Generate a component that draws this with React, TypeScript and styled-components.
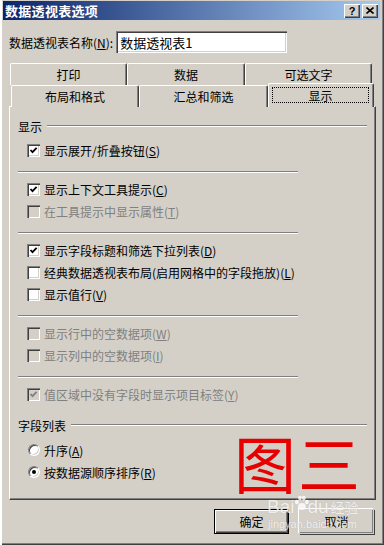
import styled, { createGlobalStyle } from 'styled-components'

const GlobalStyle = createGlobalStyle`
  body {
    margin: 0;
    background: #d4d0c8;
    font-family: "Noto Sans CJK SC", "Liberation Sans", sans-serif;
    font-size: 12px;
    color: #000;
  }
`

type Item = { label: string; key: string; checked?: boolean; disabled?: boolean }

const groups: Item[][] = [
  [{ label: '显示展开/折叠按钮', key: 'S', checked: true }],
  [
    { label: '显示上下文工具提示', key: 'C', checked: true },
    { label: '在工具提示中显示属性', key: 'T', disabled: true },
  ],
  [
    { label: '显示字段标题和筛选下拉列表', key: 'D', checked: true },
    { label: '经典数据透视表布局(启用网格中的字段拖放)', key: 'L' },
    { label: '显示值行', key: 'V' },
  ],
  [
    { label: '显示行中的空数据项', key: 'W', disabled: true },
    { label: '显示列中的空数据项', key: 'I', disabled: true },
  ],
  [{ label: '值区域中没有字段时显示项目标签', key: 'Y', checked: true, disabled: true }],
]

function Label({ item }: { item: Item }) {
  return (
    <RowText $disabled={item.disabled}>
      {item.label}(<u>{item.key}</u>)
    </RowText>
  )
}

export default function App() {
  return (
    <>
      <GlobalStyle />
      <Window>
        <TitleBar>
          <Title>数据透视表选项</Title>
          <TitleButton>?</TitleButton>
          <TitleButton>
            <svg width="8" height="7" viewBox="0 0 8 7">
              <path d="M0.5 0.5 L7.5 6.5 M7.5 0.5 L0.5 6.5" stroke="#000" strokeWidth="1.6" />
            </svg>
          </TitleButton>
        </TitleBar>

        <NameRow>
          <span>
            数据透视表名称(<u>N</u>):
          </span>
          <NameInput>数据透视表1</NameInput>
        </NameRow>

        <TabStrip>
          <TabRow $indent={7}>
            <Tab $w={117}>打印</Tab>
            <Tab $w={118}>数据</Tab>
            <Tab $w={127}>可选文字</Tab>
          </TabRow>
          <TabRow $indent={8}>
            <Tab $w={128}>布局和格式</Tab>
            <Tab $w={129}>汇总和筛选</Tab>
            <Tab $w={106} $selected>
              <FocusRing>显示</FocusRing>
            </Tab>
          </TabRow>
        </TabStrip>

        <Panel>
          <SectionHeader>
            <span>显示</span>
            <Etched />
          </SectionHeader>
          <Group $top={4}>
            {groups.map((g, gi) => (
              <div key={gi}>
                {gi > 0 && <Separator />}
                {g.map((item) => (
                  <Row key={item.key}>
                    <CheckBox $disabled={item.disabled}>
                      {item.checked && (
                        <svg width="9" height="9" viewBox="0 0 9 9">
                          <path
                            d="M1.5 4 L3.5 6.2 L7.6 1.8"
                            fill="none"
                            stroke={item.disabled ? '#808080' : '#000'}
                            strokeWidth="1.8"
                          />
                        </svg>
                      )}
                    </CheckBox>
                    <Label item={item} />
                  </Row>
                ))}
              </div>
            ))}
          </Group>

          <SectionHeader $top={11}>
            <span>字段列表</span>
            <Etched />
          </SectionHeader>
          <Group $top={5}>
            <Row>
              <Radio />
              <RowText>
                升序(<u>A</u>)
              </RowText>
            </Row>
            <Row>
              <Radio $checked />
              <RowText>
                按数据源顺序排序(<u>R</u>)
              </RowText>
            </Row>
          </Group>
        </Panel>

        <ButtonBar>
          <DialogButton $default>确定</DialogButton>
          <DialogButton>取消</DialogButton>
        </ButtonBar>

        <RedMark>图三</RedMark>
        <Watermark>
          <WmBig>
            <span>Bai</span>
            <svg width="17" height="17" viewBox="0 0 22 22">
              <g fill="rgba(255,255,255,0.8)">
                <ellipse cx="5" cy="9" rx="2.5" ry="3" />
                <ellipse cx="9" cy="4" rx="2.5" ry="3" />
                <ellipse cx="14" cy="4" rx="2.5" ry="3" />
                <ellipse cx="18" cy="9" rx="2.5" ry="3" />
                <ellipse cx="11.5" cy="15" rx="5" ry="4.5" />
              </g>
            </svg>
            <span>du</span>
            <WmCjk>经验</WmCjk>
          </WmBig>
          <WmSmall>jingyan.baidu.com</WmSmall>
        </Watermark>
      </Window>
    </>
  )
}

const Window = styled.div`
  position: relative;
  width: 384px;
  height: 545px;
  box-sizing: border-box;
  padding: 1px 4px 2px 3px;
  background: #d4d0c8;
  box-shadow: inset 2px 0 #fff, inset 1px 0 #d4d0c8, inset -1px -1px #404040,
    inset -2px -2px #808080;
  overflow: hidden;
`

const TitleBar = styled.div`
  display: flex;
  align-items: center;
  gap: 2px;
  height: 19px;
  padding: 0 2px 0 2px;
  background: linear-gradient(to right, #0a246a, #a6caf0);
`

const Title = styled.div`
  flex: 1;
  color: #fff;
  font-weight: bold;
  font-size: 13px;
  letter-spacing: 0.3px;
`

const TitleButton = styled.div`
  display: flex;
  align-items: center;
  justify-content: center;
  width: 16px;
  height: 14px;
  box-sizing: border-box;
  background: #d4d0c8;
  font-family: "Liberation Sans", sans-serif;
  font-weight: bold;
  font-size: 11px;
  box-shadow: inset 1px 1px #fff, inset -1px -1px #404040, inset -2px -2px #808080;
`

const NameRow = styled.div`
  display: flex;
  align-items: center;
  gap: 3px;
  margin-top: 11px;
  padding-left: 6px;
  font-size: 12px;
`

const NameInput = styled.div`
  width: 171px;
  height: 22px;
  box-sizing: border-box;
  display: flex;
  align-items: center;
  padding-left: 4px;
  background: #fff;
  font-size: 13px;
  box-shadow: inset 1px 1px #808080, inset 2px 2px #404040, inset -1px -1px #fff,
    inset -2px -2px #d4d0c8;
`

const TabStrip = styled.div`
  margin-top: 10px;
`

const TabRow = styled.div<{ $indent: number }>`
  display: flex;
  align-items: flex-start;
  height: 21px;
  margin-left: ${(p) => p.$indent}px;
  &:first-child {
    height: 22px;
  }
`

const Tab = styled.div<{ $w: number; $selected?: boolean }>`
  width: ${(p) => p.$w}px;
  height: ${(p) => (p.$selected ? 24 : 22)}px;
  margin-top: ${(p) => (p.$selected ? -2 : 0)}px;
  box-sizing: border-box;
  display: flex;
  align-items: ${(p) => (p.$selected ? 'flex-start' : 'center')};
  justify-content: center;
  padding: ${(p) => (p.$selected ? '3px 4px 0 3px' : '0')};
  border-top: 1px solid #fff;
  border-left: 1px solid #fff;
  border-right: 1px solid #404040;
  border-radius: 2px 2px 0 0;
  box-shadow: inset -1px 0 #808080;
  background: #d4d0c8;
  font-size: 12px;
  position: ${(p) => (p.$selected ? 'relative' : 'static')};
  z-index: ${(p) => (p.$selected ? 2 : 'auto')};
`

const FocusRing = styled.span`
  flex: 1;
  height: 14px;
  border: 1px dotted #000;
  display: flex;
  align-items: center;
  justify-content: center;
`

const Panel = styled.div`
  width: 367px;
  height: 394px;
  margin-left: 6px;
  box-sizing: border-box;
  padding: 10px 8px 0 8px;
  border-top: 1px solid #fff;
  border-left: 1px solid #fff;
  border-right: 1px solid #404040;
  border-bottom: 1px solid #404040;
  box-shadow: inset -1px -1px #808080;
`

const SectionHeader = styled.div<{ $top?: number }>`
  display: flex;
  align-items: center;
  gap: 5px;
  height: 18px;
  margin-top: ${(p) => p.$top ?? 0}px;
  font-size: 12px;
`

const Etched = styled.div`
  flex: 1;
  border-top: 1px solid #808080;
  border-bottom: 1px solid #fff;
`

const Group = styled.div<{ $top: number }>`
  margin-top: ${(p) => p.$top}px;
`

const Separator = styled.div`
  width: 280px;
  margin: 10px 0 5px;
  border-top: 1px solid #808080;
  border-bottom: 1px solid #fff;
`

const Row = styled.div`
  display: flex;
  align-items: center;
  gap: 4px;
  height: 22px;
  padding-left: 9px;
`

const RowText = styled.span<{ $disabled?: boolean }>`
  font-size: 12px;
  color: ${(p) => (p.$disabled ? '#808080' : '#000')};
  white-space: nowrap;
`

const CheckBox = styled.div<{ $disabled?: boolean }>`
  width: 13px;
  height: 13px;
  box-sizing: border-box;
  padding: 2px;
  background: ${(p) => (p.$disabled ? '#d4d0c8' : '#fff')};
  box-shadow: inset 1px 1px #808080, inset 2px 2px #404040, inset -1px -1px #fff,
    inset -2px -2px #d4d0c8;
  svg {
    display: block;
  }
`

const Radio = styled.div<{ $checked?: boolean }>`
  width: 12px;
  height: 12px;
  box-sizing: border-box;
  margin-left: 1px;
  border-radius: 50%;
  background: #fff;
  border: 1px solid;
  border-color: #808080 #fff #fff #808080;
  box-shadow: inset 1px 1px #404040, inset -1px -1px #d4d0c8;
  display: flex;
  align-items: center;
  justify-content: center;
  &::after {
    content: '';
    display: ${(p) => (p.$checked ? 'block' : 'none')};
    width: 4px;
    height: 4px;
    border-radius: 50%;
    background: #000;
  }
`

const ButtonBar = styled.div`
  display: flex;
  justify-content: flex-end;
  gap: 10px;
  margin-top: 9px;
  padding-right: 6px;
`

const DialogButton = styled.div<{ $default?: boolean }>`
  width: 75px;
  height: 25px;
  box-sizing: border-box;
  display: flex;
  align-items: center;
  justify-content: center;
  font-size: 12px;
  background: #d4d0c8;
  border: 1px solid ${(p) => (p.$default ? '#000' : 'transparent')};
  box-shadow: ${(p) =>
    p.$default
      ? 'inset 1px 1px #fff, inset -1px -1px #404040, inset -2px -2px #808080'
      : '-1px -1px #fff, 1px 1px #404040, inset -1px -1px #808080'};
`

const RedMark = styled.div`
  position: absolute;
  left: 234px;
  top: 431px;
  color: #e60000;
  font-size: 62px;
  line-height: 1;
  letter-spacing: 2px;
  pointer-events: none;
`

const Watermark = styled.div`
  position: absolute;
  left: 267px;
  top: 495px;
  color: rgba(255, 255, 255, 0.78);
  text-shadow: 0 0 1px rgba(120, 120, 120, 0.35);
  pointer-events: none;
  white-space: nowrap;
`

const WmBig = styled.div`
  display: flex;
  align-items: flex-end;
  font-family: "Liberation Sans", sans-serif;
  font-size: 19px;
  line-height: 22px;
  svg {
    margin: 0 -3px 6px -1px;
  }
`

const WmCjk = styled.span`
  font-family: "Noto Sans CJK SC", sans-serif;
  font-size: 14px;
  line-height: 22px;
  margin-left: 2px;
`

const WmSmall = styled.div`
  font-family: "Liberation Sans", sans-serif;
  font-size: 11px;
  line-height: 13px;
  margin-left: 1px;
`
